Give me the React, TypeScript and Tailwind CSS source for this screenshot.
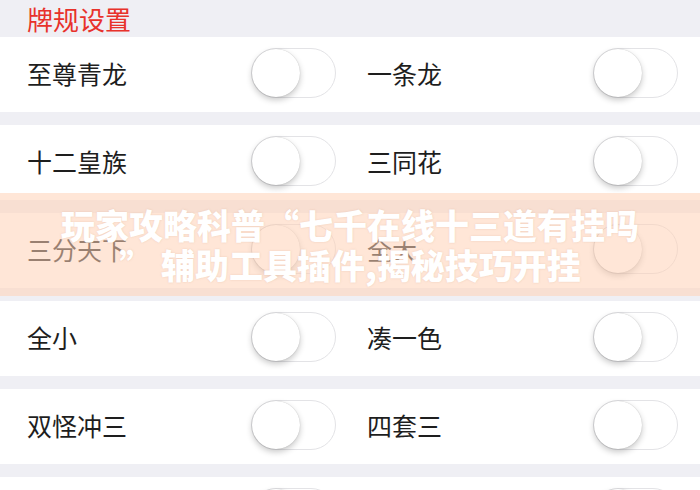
import React from "react";

const font = { fontFamily: '"Noto Sans CJK SC", "Noto Sans", sans-serif' };

function Toggle() {
  return (
    <div className="relative h-[50px] w-[85px] shrink-0 rounded-full border border-[#e3e3e6] bg-white">
      <div className="absolute left-[0px] top-[0px] h-[48px] w-[48px] rounded-full bg-white shadow-[0_3px_6px_rgba(0,0,0,0.22),0_0_1px_rgba(0,0,0,0.25)]" />
    </div>
  );
}

function Cell({ label, left }: { label: string; left: boolean }) {
  return (
    <div
      className={
        left
          ? "flex w-[350px] items-center justify-between pl-[27px] pr-[14px]"
          : "flex w-[350px] items-center justify-between pl-[17px] pr-[22px]"
      }
    >
      <span className="text-[25px] leading-none text-[#1e1e1e]">{label}</span>
      <Toggle />
    </div>
  );
}

const rows: [string, string][] = [
  ["至尊青龙", "一条龙"],
  ["十二皇族", "三同花"],
  ["三分天下", "全大"],
  ["全小", "凑一色"],
  ["双怪冲三", "四套三"],
  ["", ""],
];

export default function App() {
  return (
    <div lang="zh-CN" className="relative h-[490px] w-[700px] overflow-hidden bg-[#efeff4]" style={font}>
      <div className="flex h-[37px] items-center pl-[27px]">
        <span className="text-[26px] leading-none text-[#e8322b]">牌规设置</span>
      </div>
      <div className="flex flex-col gap-[13px]">
        {rows.map(([a, b], i) => (
          <div key={i} className="flex h-[75px] bg-white pb-[3px]">
            <Cell label={a} left />
            <Cell label={b} left={false} />
          </div>
        ))}
      </div>
      <div className="absolute left-0 top-[193px] flex h-[103px] w-[700px] flex-col items-center justify-center bg-[rgba(255,210,182,0.55)]">
        <div className="text-[34px] font-black leading-[40px] text-white [text-shadow:0_0_2px_rgba(200,150,120,0.35)]">
          玩家攻略科普“七千在线十三道有挂吗
        </div>
        <div className="text-[34px] font-black leading-[40px] text-white [text-shadow:0_0_2px_rgba(200,150,120,0.35)]">
          ” 辅助工具插件,揭秘技巧开挂
        </div>
      </div>
    </div>
  );
}
